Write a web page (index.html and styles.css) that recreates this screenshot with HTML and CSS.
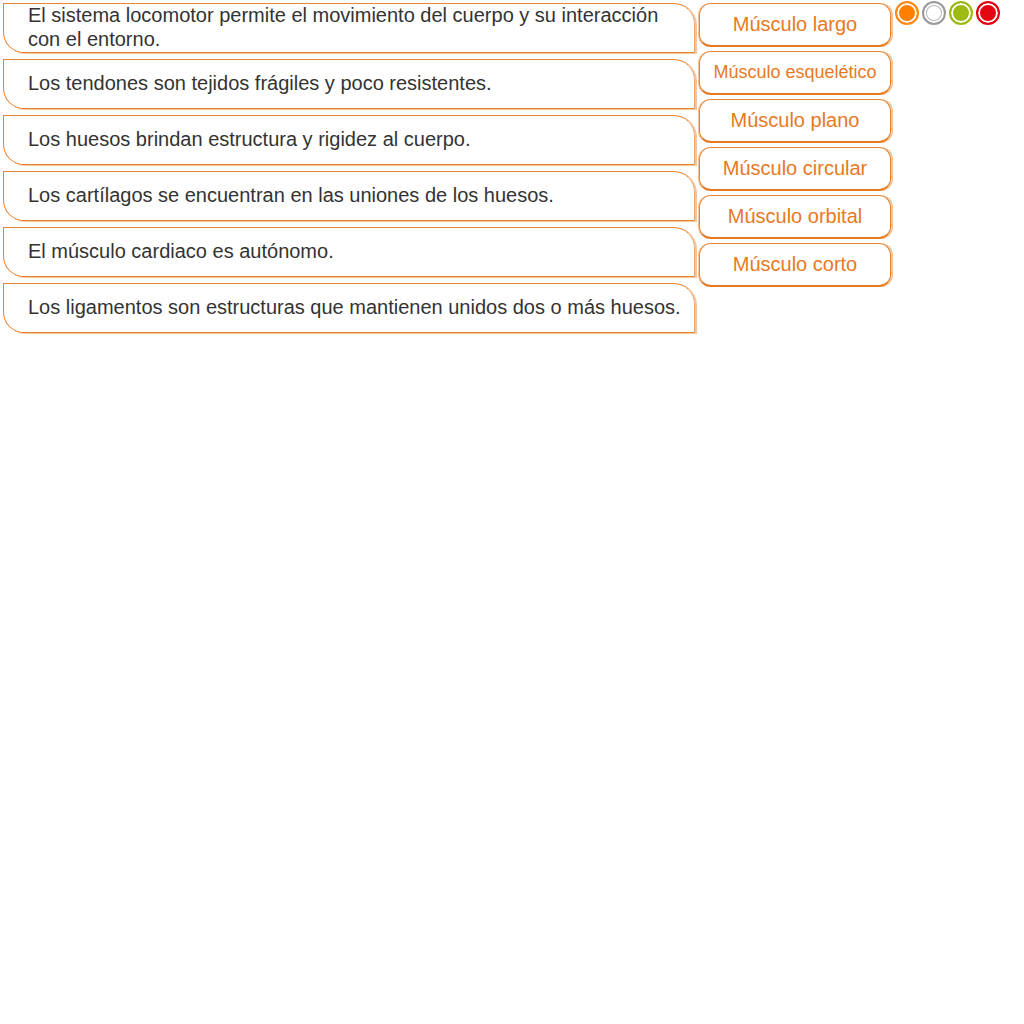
FILE: index.html
```html
<!DOCTYPE html>
<html lang="es">
<head>
<meta charset="utf-8">
<title>Sistema locomotor</title>
<link rel="stylesheet" href="styles.css">
</head>
<body>
<div class="page">
  <div class="statements">
    <div class="statement">El sistema locomotor permite el movimiento del cuerpo y su interacción con el entorno.</div>
    <div class="statement">Los tendones son tejidos frágiles y poco resistentes.</div>
    <div class="statement">Los huesos brindan estructura y rigidez al cuerpo.</div>
    <div class="statement">Los cartílagos se encuentran en las uniones de los huesos.</div>
    <div class="statement">El músculo cardiaco es autónomo.</div>
    <div class="statement">Los ligamentos son estructuras que mantienen unidos dos o más huesos.</div>
  </div>
  <div class="options">
    <div class="option">Músculo largo</div>
    <div class="option option-small">Músculo esquelético</div>
    <div class="option">Músculo plano</div>
    <div class="option">Músculo circular</div>
    <div class="option">Músculo orbital</div>
    <div class="option">Músculo corto</div>
  </div>
  <div class="dots">
    <span class="dot dot-orange"></span>
    <span class="dot dot-grey"></span>
    <span class="dot dot-green"></span>
    <span class="dot dot-red"></span>
  </div>
</div>
</body>
</html>
```

FILE: styles.css
```css
html, body {
  margin: 0;
  padding: 0;
  background: #ffffff;
}

body {
  font-family: "Liberation Sans", Arial, sans-serif;
  width: 1024px;
  height: 1024px;
}

.page {
  display: flex;
  align-items: flex-start;
  padding: 3px 0 0 3px;
}

.statements {
  display: flex;
  flex-direction: column;
  gap: 6px;
  width: 692px;
}

.statement {
  box-sizing: border-box;
  height: 50px;
  display: flex;
  align-items: center;
  padding: 0 12px 3px 24px;
  border: 1px solid #e8842f;
  border-right: 1px solid #f0a868;
  border-radius: 0 21px 0 21px;
  box-shadow: 2px 1px 0 #f6c49a;
  font-size: 20px;
  line-height: 24px;
  color: #333333;
}

.options {
  display: flex;
  flex-direction: column;
  gap: 4px;
  width: 192px;
  margin-left: 4px;
}

.option {
  box-sizing: border-box;
  height: 44px;
  display: flex;
  align-items: center;
  justify-content: center;
  border: 1px solid #e8842f;
  border-bottom: 2px solid #e6791f;
  border-radius: 12px;
  box-shadow: -1px 0 0 #f6c49a, 2px 0 0 #f6c49a;
  font-size: 20px;
  color: #e8791f;
}

.option-small {
  font-size: 18px;
}

.dots {
  display: flex;
  gap: 3px;
  margin-left: 4px;
  margin-top: -2px;
}

.dot {
  box-sizing: border-box;
  width: 24px;
  height: 24px;
  border-radius: 50%;
  border: 2px solid;
  box-shadow: inset 0 0 0 2px #ffffff;
}

.dot-orange {
  background: #ff7f00;
  border-color: #ff8a1a;
}

.dot-grey {
  background: #ffffff;
  border-color: #9a9a9a;
  box-shadow: inset 0 0 0 2px #ffffff, inset 0 0 0 3px #b8b8b8;
}

.dot-green {
  background: #9bbb12;
  border-color: #9bbb12;
}

.dot-red {
  background: #e30613;
  border-color: #e30613;
}
```
